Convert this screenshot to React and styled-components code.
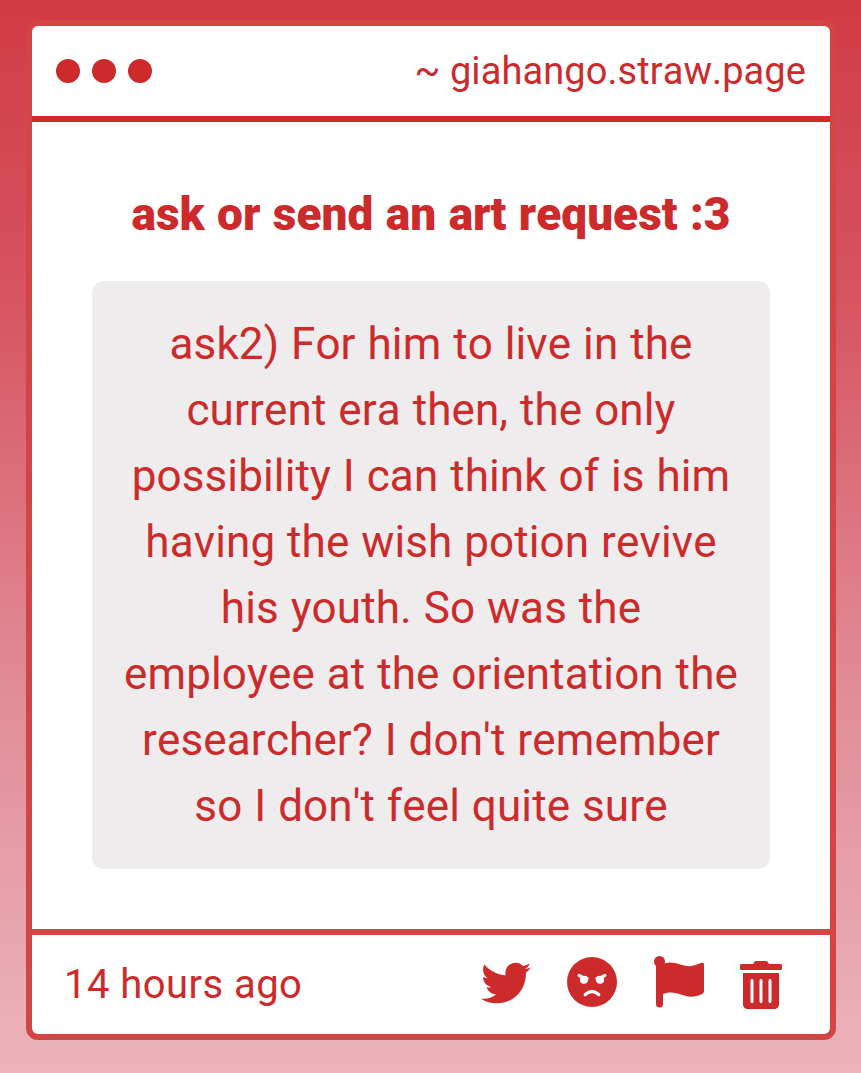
import React from 'react';
import styled, { createGlobalStyle } from 'styled-components';
import { FaTwitter } from 'react-icons/fa';

const RED = '#cc2a2b';
const EDGE = '#d34445';

const GlobalStyle = createGlobalStyle`
    * {
        box-sizing: border-box;
    }

    body {
        margin: 0;
        font-family: Roboto, "Liberation Sans", sans-serif;
        font-kerning: none;
        color: ${RED};
    }
`;

const Page = styled.main`
    height: 1073px;
    padding: 20px 25px 33px 26px;
    background: linear-gradient(#d13b45, #d65561 28%, #e08791 60%, #e8a9b2 90%, #ecb4bc);
`;

const Card = styled.article`
    display: flex;
    flex-direction: column;
    height: 1020px;
    border: 6px solid ${EDGE};
    border-radius: 12px;
    background: white;
`;

const Header = styled.header`
    display: flex;
    flex-shrink: 0;
    align-items: center;
    justify-content: space-between;
    height: 96px;
    padding: 0 24px;
    border-bottom: 6px solid ${RED};
`;

const Dots = styled.div`
    display: flex;
    gap: 12px;
`;

const Dot = styled.span`
    width: 24px;
    height: 24px;
    border-radius: 50%;
    background: ${RED};
`;

const Address = styled.span`
    font-size: 38px;
    letter-spacing: 0.08px;
`;

const Body = styled.section`
    flex: 1;
    padding: 59px 60px 0;
    text-align: center;
`;

const Title = styled.h1`
    margin: 0 0 34px;
    font-size: 46px;
    font-weight: 900;
    line-height: 66px;
    word-spacing: 1px;
`;

const Message = styled.p`
    margin: 0;
    padding: 30px;
    border-radius: 12px;
    background: #eeecec;
    font-size: 44px;
    line-height: 66px;
    letter-spacing: 0.12px;
    word-spacing: 0.8px;
`;

const Footer = styled.footer`
    display: flex;
    flex-shrink: 0;
    align-items: center;
    justify-content: space-between;
    height: 105px;
    padding: 0 48px 0 32px;
    border-top: 6px solid ${EDGE};
`;

const Time = styled.time`
    font-size: 40px;
    letter-spacing: 0.45px;
`;

const Actions = styled.div`
    display: flex;
    align-items: center;
    gap: 36px;
`;

const Action = styled.button`
    display: flex;
    padding: 0 0 ${(props) => props.$lift || 0}px;
    border: 0;
    background: none;
    color: inherit;
    cursor: pointer;
`;

const AngryIcon = () => (
    <svg width="51" height="50" viewBox="0 0 51 50">
        <circle cx="25" cy="25" r="25" fill="currentColor" />
        <g fill="white">
            <circle cx="17" cy="22.800" r="4" />
            <circle cx="33" cy="22.800" r="4" />
        </g>
        <g fill="none" stroke="white" strokeWidth="3.400" strokeLinecap="round">
            <path d="M12.300 18.500q3 2.200 7.700 3" />
            <path d="M37.700 18.500q-3 2.200-7.700 3" />
            <path d="M18.300 37.600q6.700-6 13.400 0" />
        </g>
    </svg>
);

const FlagIcon = () => (
    <svg width="50" height="52" viewBox="0 0 50 52" fill="currentColor">
        <circle cx="5.500" cy="5.500" r="5.500" />
        <path d="M2 6h7v42a3.500 3.500 0 0 1-7 0z" />
        <path d="M8 8c2.500-.7 5-1.500 8-1.500 8 0 12 3.700 19 3.700 5 0 8.500-2.200 12.500-3.400 1.700-.5 2.500.2 2.500 1.700V35c0 1.500-.5 2.300-2 3-3.500 1.700-7 2.700-11 2.700-7 0-13-4.200-20-4.200-3 0-6 .7-8 1.500z" />
    </svg>
);

const TrashIcon = () => (
    <svg width="42" height="48" viewBox="0 0 42 48" fill="currentColor">
        <path d="M1.500 3H13l1.500-2.200Q15 0 16 0h10q1 0 1.500.8L29 3h11.500Q42 3 42 4.500v3Q42 9 40.500 9h-39Q0 9 0 7.500v-3Q0 3 1.500 3z" />
        <path fillRule="evenodd" d="M3 12h36v31.500a4.500 4.500 0 0 1-4.500 4.500h-27A4.500 4.500 0 0 1 3 43.500zM10.500 19.500v21a1.500 1.500 0 0 0 3 0v-21a1.500 1.500 0 0 0-3 0zm9 0v21a1.500 1.500 0 0 0 3 0v-21a1.500 1.500 0 0 0-3 0zm9 0v21a1.500 1.500 0 0 0 3 0v-21a1.500 1.500 0 0 0-3 0z" />
    </svg>
);

function App() {
    return (
        <>
            <GlobalStyle />
            <Page>
                <Card>
                    <Header>
                        <Dots>
                            <Dot />
                            <Dot />
                            <Dot />
                        </Dots>
                        <Address>~ giahango.straw.page</Address>
                    </Header>
                    <Body>
                        <Title>ask or send an art request :3</Title>
                        <Message>
                            ask2) For him to live in the current era then, the only possibility I can think of is him
                            having the wish potion revive his youth. So was the employee at the orientation the
                            researcher? I don't remember so I don't feel quite sure
                        </Message>
                    </Body>
                    <Footer>
                        <Time>14 hours ago</Time>
                        <Actions>
                            <Action $lift={4} aria-label="Share on Twitter"><FaTwitter size="50" /></Action>
                            <Action $lift={5} aria-label="Block"><AngryIcon /></Action>
                            <Action $lift={5} aria-label="Report"><FlagIcon /></Action>
                            <Action aria-label="Delete"><TrashIcon /></Action>
                        </Actions>
                    </Footer>
                </Card>
            </Page>
        </>
    );
}

export default App;
